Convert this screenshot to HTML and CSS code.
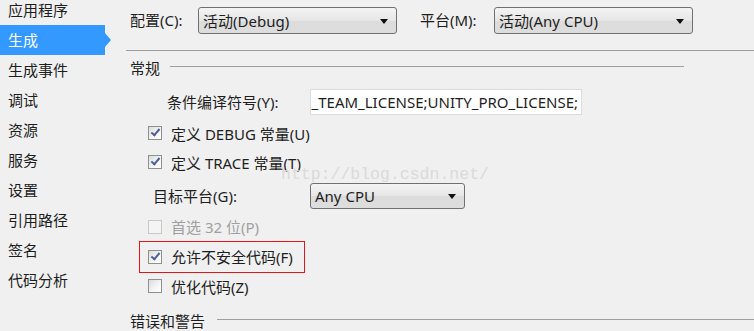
FILE: index.html
```html
<!DOCTYPE html>
<html lang="zh">
<head>
<meta charset="utf-8">
<link rel="stylesheet" href="styles.css">
</head>
<body>
<div class="page">
  <nav class="sidebar">
    <div class="nav-item first">应用程序</div>
    <div class="nav-item active">生成</div>
    <div class="nav-item">生成事件</div>
    <div class="nav-item">调试</div>
    <div class="nav-item">资源</div>
    <div class="nav-item">服务</div>
    <div class="nav-item">设置</div>
    <div class="nav-item">引用路径</div>
    <div class="nav-item">签名</div>
    <div class="nav-item">代码分析</div>
  </nav>
  <main class="main">
    <div class="toolbar">
      <span class="tb-label cfg">配置(C):</span>
      <div class="select wide"><span>活动(Debug)</span><i class="arrow"></i></div>
      <span class="tb-label plat">平台(M):</span>
      <div class="select wide"><span>活动(Any CPU)</span><i class="arrow"></i></div>
    </div>

    <div class="section-head general"><span>常规</span><div class="rule short"></div></div>

    <div class="symbols-row">
      <span class="sym-label">条件编译符号(Y):</span>
      <div class="textbox"><span>_TEAM_LICENSE;UNITY_PRO_LICENSE;</span></div>
    </div>

    <div class="check-row r1"><span class="cb checked"></span><span>定义 DEBUG 常量(U)</span></div>
    <div class="check-row r2"><span class="cb checked"></span><span>定义 TRACE 常量(T)</span></div>
    <div class="target-row">
      <span class="target-label">目标平台(G):</span>
      <div class="select narrow"><span>Any CPU</span><i class="arrow"></i></div>
    </div>
    <div class="check-row r4 disabled"><span class="cb"></span><span>首选 32 位(P)</span></div>
    <div class="highlight-row">
      <div class="highlight"><span class="cb checked"></span><span>允许不安全代码(F)</span></div>
    </div>
    <div class="check-row r6"><span class="cb"></span><span>优化代码(Z)</span></div>

    <div class="section-head errors"><span>错误和警告</span><div class="rule long"></div></div>
  </main>
  <div class="watermark">http://blog.csdn.net/</div>
</div>
</body>
</html>
```
FILE: styles.css
```css
html, body {
  margin: 0;
  padding: 0;
  background: #f0f0f0;
  overflow: hidden;
}
body {
  font-family: "Segoe UI", "Noto Sans", "Noto Sans CJK SC", sans-serif;
  font-size: 15px;
  color: #1e1e1e;
}
.page {
  position: relative;
  display: flex;
  width: 754px;
  height: 331px;
  overflow: hidden;
}
.sidebar {
  width: 127px;
  flex: none;
  display: flex;
  flex-direction: column;
}
.nav-item {
  height: 30px;
  line-height: 30px;
  padding-left: 8px;
  width: 97px;
  position: relative;
  white-space: nowrap;
}
.nav-item.first { margin-top: -5px; }
.nav-item.active {
  background: #3399ff;
  color: #fff;
}
.nav-item.active::after {
  content: "";
  position: absolute;
  left: 105px;
  top: 8px;
  border-top: 7px solid transparent;
  border-bottom: 7px solid transparent;
  border-left: 6px solid #3399ff;
}
.main {
  flex: 1;
  display: flex;
  flex-direction: column;
}
.toolbar {
  height: 51px;
  box-sizing: border-box;
  border-bottom: 1px solid #a0a0a0;
  display: flex;
  align-items: flex-start;
  padding: 7px 0 0 4px;
  margin-left: -1px;
}
.tb-label {
  height: 27px;
  line-height: 26px;
  white-space: nowrap;
}
.tb-label.cfg { width: 68px; }
.tb-label.plat { width: 74px; margin-left: 23px; }
.select {
  box-sizing: border-box;
  height: 27px;
  border: 1px solid #707070;
  border-radius: 3px;
  background: linear-gradient(#f4f4f4, #e6e6e6 50%, #dcdcdc 51%, #dddddd);
  display: flex;
  align-items: center;
  padding-left: 4px;
  position: relative;
  white-space: nowrap;
}
.select.wide { width: 199px; }
.select.narrow { width: 155px; height: 26px; }
.select .arrow {
  position: absolute;
  right: 8px;
  top: 50%;
  margin-top: -2px;
  border-left: 4px solid transparent;
  border-right: 4px solid transparent;
  border-top: 5px solid #111;
}
.section-head {
  display: flex;
  align-items: center;
  padding-left: 3px;
  height: 22px;
}
.section-head.general { margin-top: 6px; }
.section-head.errors { margin-top: 10px; }
.rule {
  height: 1px;
  background: #a0a0a0;
  margin-left: 10px;
  position: relative;
  top: -1px;
}
.rule.short { width: 514px; }
.rule.long { flex: 1; margin-left: 12px; }
.symbols-row {
  display: flex;
  align-items: center;
  margin-top: 10px;
  padding-left: 40px;
  height: 26px;
}
.sym-label { width: 143px; white-space: nowrap; }
.textbox {
  box-sizing: border-box;
  width: 272px;
  height: 26px;
  background: #fff;
  border: 1px solid #dcdcdc;
  display: flex;
  justify-content: flex-end;
  align-items: center;
  white-space: nowrap;
  padding-right: 3px;
}
.textbox span { flex: none; }
.check-row {
  display: flex;
  align-items: center;
  padding-left: 21px;
  white-space: nowrap;
}
.check-row.r1 { margin-top: 4px; height: 30px; }
.check-row.r2 { height: 28px; }
.check-row.r4 { height: 22px; }
.check-row.r6 { height: 26px; }
.check-row.disabled { color: #a0a0a0; }
.target-row {
  display: flex;
  align-items: center;
  height: 40px;
  padding-left: 26px;
}
.target-label { width: 157px; white-space: nowrap; }
.cb {
  box-sizing: border-box;
  width: 14px;
  height: 14px;
  flex: none;
  border: 1px solid #8e8f8f;
  background: linear-gradient(135deg, #dcdcdc, #f6f6f6 60%, #ffffff);
  margin-right: 9px;
  position: relative;
}
.disabled .cb {
  border-color: #c8c8c8;
  background: #f4f4f4;
}
.cb.checked::after {
  content: "";
  position: absolute;
  left: 4px;
  top: 0px;
  width: 3px;
  height: 7px;
  border-right: 2px solid #4c5f98;
  border-bottom: 2px solid #4c5f98;
  transform: rotate(40deg);
}
.highlight-row {
  height: 36px;
  padding-top: 3px;
  box-sizing: border-box;
  padding-left: 12px;
}
.highlight {
  box-sizing: border-box;
  width: 166px;
  height: 32px;
  border: 1px solid #e8141b;
  display: flex;
  align-items: center;
  padding-left: 8px;
  white-space: nowrap;
}
.watermark {
  position: absolute;
  left: 281px;
  top: 165px;
  font-family: "Liberation Mono", "DejaVu Sans Mono", monospace;
  font-size: 16.5px;
  color: #dadada;
  pointer-events: none;
  white-space: nowrap;
}
```
